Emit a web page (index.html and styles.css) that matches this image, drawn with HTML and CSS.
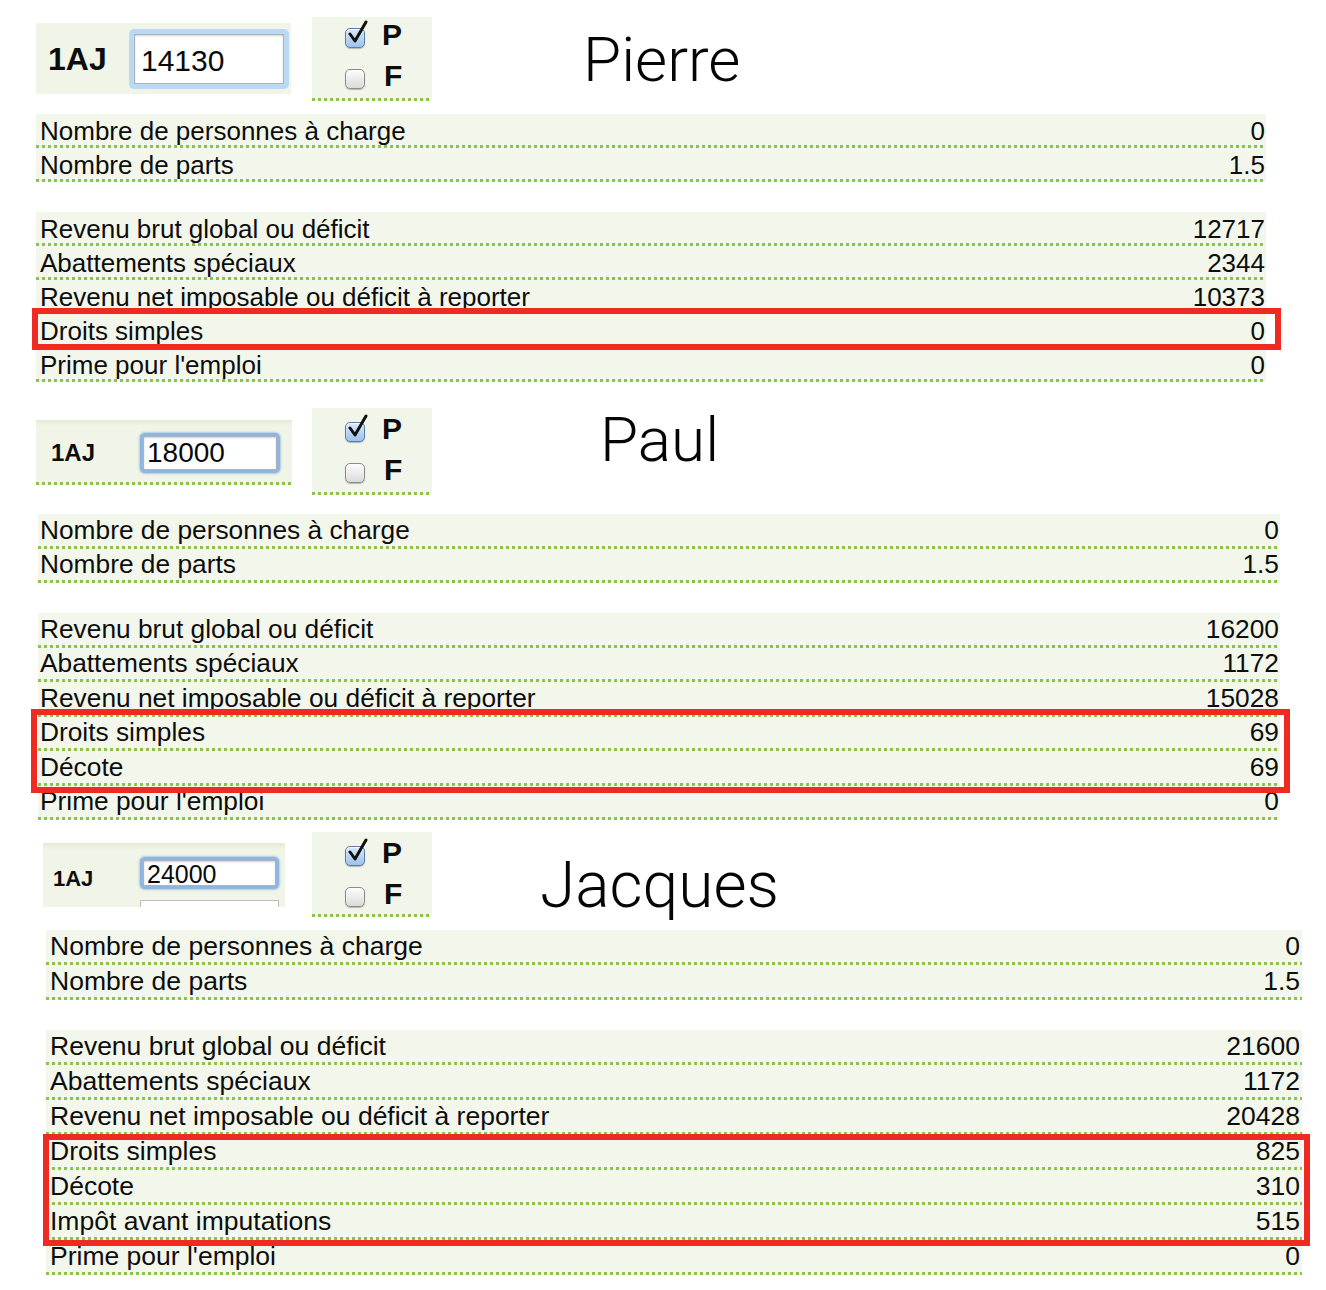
FILE: index.html
```html
<!DOCTYPE html>
<html lang="fr">
<head>
<meta charset="utf-8">
<title>Pierre, Paul, Jacques</title>
<link rel="stylesheet" href="styles.css">
</head>
<body>
<main class="page">

  <section class="case case-1">
    <div class="head">
      <div class="field">
        <span class="code">1AJ</span>
        <div class="field-col">
          <div class="input"><span class="input-box">14130</span></div>
        </div>
      </div>
      <div class="checks">
        <div class="ck">
          <span class="cb cb-on"><svg class="tick" viewBox="0 0 24 26" width="24" height="26"><path d="M5 14 L10 21 L21 2" fill="none" stroke="#111" stroke-width="3" stroke-linecap="round" stroke-linejoin="round"/></svg></span>
          <b class="ck-l">P</b>
        </div>
        <div class="ck"><span class="cb"></span><b class="ck-l">F</b></div>
      </div>
      <div class="name">Pierre</div>
    </div>
    <div class="rows">
      <div class="row"><span>Nombre de personnes à charge</span><span>0</span></div>
      <div class="row"><span>Nombre de parts</span><span>1.5</span></div>
    </div>
    <div class="rows rows-b">
      <div class="row"><span>Revenu brut global ou déficit</span><span>12717</span></div>
      <div class="row"><span>Abattements spéciaux</span><span>2344</span></div>
      <div class="row"><span>Revenu net imposable ou déficit à reporter</span><span>10373</span></div>
      <div class="hl">
        <div class="row"><span>Droits simples</span><span>0</span></div>
      </div>
      <div class="row"><span>Prime pour l'emploi</span><span>0</span></div>
    </div>
  </section>

  <section class="case case-2">
    <div class="head">
      <div class="field">
        <span class="code">1AJ</span>
        <div class="field-col">
          <div class="input"><span class="input-box">18000</span></div>
        </div>
      </div>
      <div class="checks">
        <div class="ck">
          <span class="cb cb-on"><svg class="tick" viewBox="0 0 24 26" width="24" height="26"><path d="M5 14 L10 21 L21 2" fill="none" stroke="#111" stroke-width="3" stroke-linecap="round" stroke-linejoin="round"/></svg></span>
          <b class="ck-l">P</b>
        </div>
        <div class="ck"><span class="cb"></span><b class="ck-l">F</b></div>
      </div>
      <div class="name">Paul</div>
    </div>
    <div class="rows">
      <div class="row"><span>Nombre de personnes à charge</span><span>0</span></div>
      <div class="row"><span>Nombre de parts</span><span>1.5</span></div>
    </div>
    <div class="rows rows-b">
      <div class="row"><span>Revenu brut global ou déficit</span><span>16200</span></div>
      <div class="row"><span>Abattements spéciaux</span><span>1172</span></div>
      <div class="row"><span>Revenu net imposable ou déficit à reporter</span><span>15028</span></div>
      <div class="hl">
        <div class="row"><span>Droits simples</span><span>69</span></div>
        <div class="row"><span>Décote</span><span>69</span></div>
      </div>
      <div class="row"><span>Prime pour l'emploi</span><span>0</span></div>
    </div>
  </section>

  <section class="case case-3">
    <div class="head">
      <div class="field">
        <span class="code">1AJ</span>
        <div class="field-col">
          <div class="input"><span class="input-box">24000</span></div>
          <div class="input-ghost"></div>
        </div>
      </div>
      <div class="checks">
        <div class="ck">
          <span class="cb cb-on"><svg class="tick" viewBox="0 0 24 26" width="24" height="26"><path d="M5 14 L10 21 L21 2" fill="none" stroke="#111" stroke-width="3" stroke-linecap="round" stroke-linejoin="round"/></svg></span>
          <b class="ck-l">P</b>
        </div>
        <div class="ck"><span class="cb"></span><b class="ck-l">F</b></div>
      </div>
      <div class="name">Jacques</div>
    </div>
    <div class="rows">
      <div class="row"><span>Nombre de personnes à charge</span><span>0</span></div>
      <div class="row"><span>Nombre de parts</span><span>1.5</span></div>
    </div>
    <div class="rows rows-b">
      <div class="row"><span>Revenu brut global ou déficit</span><span>21600</span></div>
      <div class="row"><span>Abattements spéciaux</span><span>1172</span></div>
      <div class="row"><span>Revenu net imposable ou déficit à reporter</span><span>20428</span></div>
      <div class="hl">
        <div class="row"><span>Droits simples</span><span>825</span></div>
        <div class="row"><span>Décote</span><span>310</span></div>
        <div class="row"><span>Impôt avant imputations</span><span>515</span></div>
      </div>
      <div class="row"><span>Prime pour l'emploi</span><span>0</span></div>
    </div>
  </section>

</main>
</body>
</html>
```

FILE: styles.css
```css
* { box-sizing: border-box; }

html, body {
  margin: 0;
  padding: 0;
  background: #ffffff;
}

body {
  font-family: "Liberation Sans", Arial, Helvetica, sans-serif;
  color: #0d0d0d;
  width: 1326px;
  height: 1290px;
  overflow: hidden;
}

.page {
  display: flex;
  flex-direction: column;
}

/* ---------- per-case geometry ---------- */
.case-1 {
  --head-top: 17px;
  --field-left: 36px;
  --field-w: 255px;
  --field-h: 71px;
  --field-mt: 6px;
  --code-fs: 32px;
  --code-pl: 12px;
  --in-w: 160px;
  --in-h: 60px;
  --in-pad: 5px;
  --in-fs: 30px;
  --in-mr: 2px;
  --in-mt: 0px;
  --in-pl: 6px;
  --in-pt: 4px;
  --ring: #bcd9f4;
  --checks-h: 84px;
  --checks-pt: 0px;
  --name-ml: 151px;
  --name-mt: 12px;
  --name-fs: 62px;
  --rows-mt: 13px;
  --rows-left: 36px;
  --rows-w: 1230px;
  --rh: 34px;
  --row-pt: 3px;
  --fs: 26px;
  --pl: 4px;
  --pr: 1px;
  --hl-t: -6px;
  --hl-b: -2px;
  --hl-l: -4px;
  --hl-r: -15px;
  padding-top: var(--head-top);
}

.case-2 {
  --head-top: 26px;
  --field-left: 36px;
  --field-w: 256px;
  --field-h: 65px;
  --field-mt: 12px;
  --code-fs: 24px;
  --code-pl: 15px;
  --in-w: 140px;
  --in-h: 40px;
  --in-pad: 3px;
  --in-fs: 28px;
  --in-mr: 12px;
  --in-mt: 0px;
  --in-pl: 3px;
  --in-pt: 1px;
  --ring: #8fb6e0;
  --checks-h: 87px;
  --checks-pt: 3px;
  --name-ml: 168px;
  --name-mt: 1px;
  --name-fs: 62px;
  --rows-mt: 19px;
  --rows-left: 38px;
  --rows-w: 1242px;
  --rh: 34.5px;
  --row-pt: 0px;
  --fs: 26.3px;
  --pl: 2px;
  --pr: 1px;
  --hl-t: -8px;
  --hl-b: -7px;
  --hl-l: -7px;
  --hl-r: -10px;
  padding-top: var(--head-top);
}

.case-3 {
  --head-top: 12px;
  --field-left: 43px;
  --field-w: 242px;
  --field-h: 64px;
  --field-mt: 11px;
  --code-fs: 22px;
  --code-pl: 10px;
  --in-w: 139px;
  --in-h: 32px;
  --in-pad: 3px;
  --in-fs: 25px;
  --in-mr: 6px;
  --in-mt: 14px;
  --in-pl: 3px;
  --in-pt: 2px;
  --ring: #8fb6e0;
  --checks-h: 85px;
  --checks-pt: 3px;
  --name-ml: 108px;
  --name-mt: 22px;
  --name-fs: 64px;
  --rows-mt: 12px;
  --rows-left: 46px;
  --rows-w: 1256px;
  --rh: 35px;
  --row-pt: 0px;
  --fs: 26.5px;
  --pl: 4px;
  --pr: 2px;
  --hl-t: -1px;
  --hl-b: -6px;
  --hl-l: -3px;
  --hl-r: -8px;
  padding-top: var(--head-top);
}

/* ---------- head ---------- */
.head {
  display: flex;
  align-items: flex-start;
  padding-left: var(--field-left);
}

.field {
  width: var(--field-w);
  height: var(--field-h);
  margin-top: var(--field-mt);
  background: #f1f5e7;
  display: flex;
  align-items: center;
  overflow: hidden;
}

.case-2 .field {
  background:
    linear-gradient(90deg, #8dc04f 3px, transparent 3px) 0 100% / 6px 3px repeat-x,
    linear-gradient(#e3ecd3, #f1f5e7 6px),
    #f1f5e7;
}

.case-3 .field {
  background: linear-gradient(#e3ecd3, #f1f5e7 7px), #f1f5e7;
  align-items: flex-start;
}

.code {
  font-weight: bold;
  font-size: var(--code-fs);
  padding-left: var(--code-pl);
  line-height: 1;
}

.case-3 .code {
  align-self: center;
  margin-top: 8px;
}

.field-col {
  margin-left: auto;
  margin-right: var(--in-mr);
  margin-top: var(--in-mt);
  display: flex;
  flex-direction: column;
  gap: 11px;
}

.input {
  width: var(--in-w);
  height: var(--in-h);
  padding: var(--in-pad);
  border-radius: 5px;
  background: var(--ring);
  display: flex;
}

.case-2 .input,
.case-3 .input {
  box-shadow: 0 0 2px 1px rgba(120, 165, 215, 0.55);
}

.input-box {
  flex: 1;
  background: #fff;
  border: 1px solid #a9b4bf;
  box-shadow: inset 0 1px 2px rgba(0, 0, 0, 0.18);
  font-size: var(--in-fs);
  line-height: 1;
  display: flex;
  align-items: center;
  padding-left: var(--in-pl);
  padding-top: var(--in-pt);
  color: #0a0a0a;
}

.input-ghost {
  width: var(--in-w);
  height: 20px;
  background: #fff;
  border: 1px solid #bdbdbd;
}

/* ---------- checkboxes ---------- */
.checks {
  width: 120px;
  height: var(--checks-h);
  margin-left: calc(312px - var(--field-left) - var(--field-w));
  padding-top: var(--checks-pt);
  background:
    linear-gradient(90deg, #8dc04f 3px, transparent 3px) 0 100% / 6px 3px repeat-x,
    #f2f6ea;
  display: flex;
  flex-direction: column;
}

.ck {
  height: 41px;
  display: flex;
  align-items: center;
  padding-left: 33px;
}

.cb {
  position: relative;
  width: 20px;
  height: 20px;
  border-radius: 5px;
  border: 1px solid #8c8c8c;
  background: linear-gradient(#fdfdfd, #dadada);
  box-shadow: inset 0 1px 1px rgba(255, 255, 255, 0.8), 0 1px 1px rgba(0, 0, 0, 0.25);
  flex: none;
}

.cb-on {
  border-color: #5b7ea8;
  background: linear-gradient(#dbe9f8, #9cc2ea);
}

.tick {
  position: absolute;
  left: -1px;
  top: -9px;
}

.ck-l {
  font-size: 30px;
  line-height: 30px;
  font-weight: bold;
  margin-left: 17px;
  margin-bottom: 5px;
}

.ck + .ck .ck-l {
  margin-left: 19px;
}

/* ---------- name ---------- */
.name {
  margin-left: var(--name-ml);
  margin-top: var(--name-mt);
  font-family: Roboto, "Liberation Sans", sans-serif;
  font-weight: 300;
  font-size: var(--name-fs);
  line-height: var(--name-fs);
  color: #050505;
}

/* ---------- rows ---------- */
.rows {
  margin-left: var(--rows-left);
  width: var(--rows-w);
  margin-top: var(--rows-mt);
  display: flex;
  flex-direction: column;
}

.rows-b {
  margin-top: 30px;
}

.row {
  height: var(--rh);
  padding: var(--row-pt) var(--pr) 3px var(--pl);
  display: flex;
  justify-content: space-between;
  align-items: center;
  font-size: var(--fs);
  line-height: 1;
  background:
    linear-gradient(90deg, #8dc04f 3px, transparent 3px) 0 100% / 6px 3px repeat-x,
    #f3f7eb;
  white-space: nowrap;
}

.hl {
  position: relative;
  display: flex;
  flex-direction: column;
}

.hl::after {
  content: "";
  position: absolute;
  top: var(--hl-t);
  bottom: var(--hl-b);
  left: var(--hl-l);
  right: var(--hl-r);
  border: 6px solid #ef2a22;
  pointer-events: none;
  z-index: 2;
}
```
